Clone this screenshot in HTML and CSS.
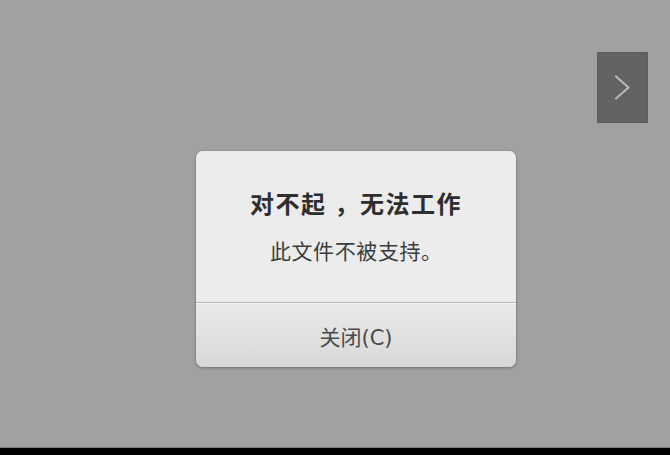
FILE: index.html
```html
<!DOCTYPE html>
<html lang="zh-CN">
<head>
<meta charset="utf-8">
<title>对不起，无法工作</title>
<link rel="stylesheet" href="styles.css">
</head>
<body>
<div class="screen">
  <div class="top-row">
    <div class="next-btn">
      <svg width="49" height="69" viewBox="0 0 49 69"><polyline points="18,23.5 30.5,34.5 18,45.5" fill="none" stroke="#b8b8b8" stroke-width="2.2" stroke-linecap="round" stroke-linejoin="round"/></svg>
    </div>
  </div>
  <div class="dialog">
    <div class="dialog-body">
      <div class="title">对不起<span class="punct-c">，</span>无法工作</div>
      <div class="message">此文件不被支持<span class="punct-l">。</span></div>
    </div>
    <div class="dialog-sep"></div>
    <div class="dialog-button">关闭(C)</div>
  </div>
</div>
<div class="bottom-bar"></div>
</body>
</html>
```

FILE: styles.css
```css
html, body {
  margin: 0;
  padding: 0;
  background: #000;
}
body {
  width: 670px;
  height: 455px;
  overflow: hidden;
  font-family: "Noto Sans CJK SC", "Noto Sans", sans-serif;
}
.screen {
  height: 447px;
  background: #a1a1a1;
  display: flex;
  flex-direction: column;
}
.top-row {
  display: flex;
  justify-content: flex-end;
  padding: 53px 23px 0 0;
}
.next-btn {
  width: 49px;
  height: 69px;
  background: #636363;
  box-shadow: 0 0 0 1px #5c5c5c;
}
.next-btn svg {
  display: block;
}
.dialog {
  margin: 29px 0 0 196px;
  width: 320px;
  border-radius: 7px;
  background: #ebebeb;
  box-shadow: 0 0 1px rgba(0,0,0,0.45), 0 1px 3px rgba(0,0,0,0.3);
  overflow: hidden;
}
.dialog-body {
  height: 151px;
  box-sizing: border-box;
  padding-top: 37px;
  text-align: center;
  background: #ececec;
}
.title {
  font-size: 24px;
  line-height: 30px;
  font-weight: bold;
  color: #2e2e2e;
  letter-spacing: 1.5px;
}
.punct-c {
  padding-left: 8px;
}
.punct-l {
  display: inline-block;
  width: 1em;
  text-align: left;
}
.message {
  margin-top: 18px;
  font-size: 21px;
  line-height: 28px;
  color: #3c3c3c;
  letter-spacing: 0.6px;
}
.dialog-sep {
  height: 1px;
  background: #b9b9b9;
  border-bottom: 1px solid #f6f6f6;
}
.dialog-button {
  height: 63px;
  display: flex;
  align-items: center;
  justify-content: center;
  font-family: "DejaVu Sans", "Noto Sans CJK SC", sans-serif;
  font-size: 21px;
  color: #4a4a4a;
  background: linear-gradient(#e9e9e9, #dedede 70%, #d6d6d6);
}
.bottom-bar {
  height: 8px;
  background: #000;
  border-top: 1px solid #7c7c7c;
  box-sizing: border-box;
}
```
